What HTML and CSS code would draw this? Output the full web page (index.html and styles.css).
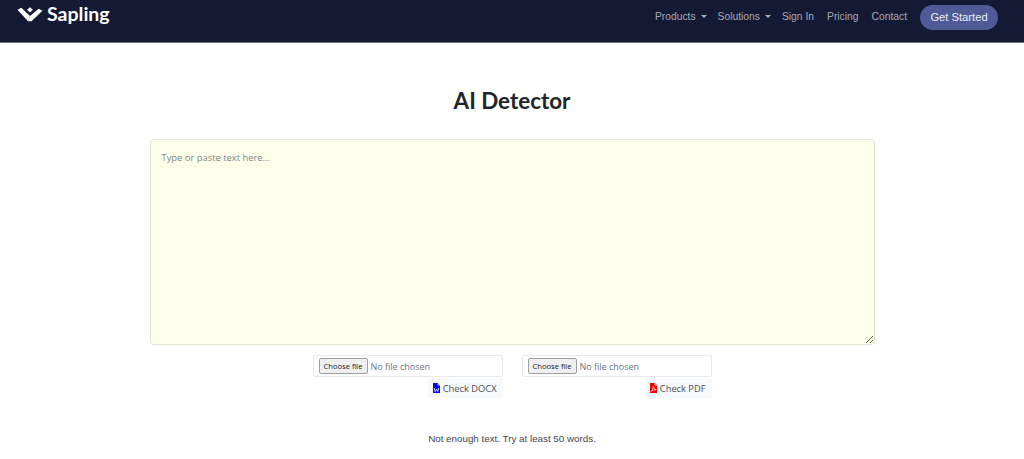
FILE: index.html
```html
<!DOCTYPE html>
<html lang="en">
<head>
<meta charset="utf-8">
<title>AI Detector - Sapling</title>
<link rel="stylesheet" href="styles.css">
</head>
<body>
<header class="navbar">
  <a class="brand" href="#">
    <svg class="brand-mark" viewBox="0 0 27 15" width="26" height="15" aria-hidden="true">
      <path d="M0.5 2.5 L4.5 0.5 L13.5 9 L11.5 14.5 Z" fill="#fff"/>
      <path d="M11.5 14.5 L15 14.5 L26.5 3.5 L22.5 1.5 L13.5 9 Z" fill="#fff"/>
      <path d="M10.5 2.5 L13.5 0 L16.5 2.5 L13.5 5.5 Z" fill="#fff"/>
    </svg>
    <span class="brand-name">Sapling</span>
  </a>
  <nav class="nav-links">
    <a class="nav-link nav-menu" href="#">Products<span class="caret"></span></a>
    <a class="nav-link nav-menu" href="#">Solutions<span class="caret"></span></a>
    <a class="nav-link" href="#">Sign In</a>
    <a class="nav-link" href="#">Pricing</a>
    <a class="nav-link" href="#">Contact</a>
    <a class="cta" href="#">Get Started</a>
  </nav>
</header>
<main class="content">
  <h1 class="title">AI Detector</h1>
  <textarea class="editor" placeholder="Type or paste text here..."></textarea>
  <div class="uploads">
    <div class="upload">
      <label class="file">
        <span class="file-button">Choose file</span>
        <span class="file-name">No file chosen</span>
      </label>
      <button class="check check-docx" type="button">
        <svg class="doc-icon" viewBox="0 0 7 10" width="7" height="10" aria-hidden="true">
          <path d="M0 0 H4.5 L7 2.5 V10 H0 Z" fill="#0000f0"/>
          <path d="M4.5 0 L7 2.5 H4.5 Z" fill="#b0b4f0"/>
          <path d="M1.2 5 L2.2 8.6 L3.5 6 L4.8 8.6 L5.8 5" fill="none" stroke="#fff" stroke-width="0.8"/>
        </svg>
        Check DOCX
      </button>
    </div>
    <div class="upload">
      <label class="file">
        <span class="file-button">Choose file</span>
        <span class="file-name">No file chosen</span>
      </label>
      <button class="check" type="button">
        <svg class="doc-icon" viewBox="0 0 7 10" width="7" height="10" aria-hidden="true">
          <path d="M0 0 H4.5 L7 2.5 V10 H0 Z" fill="#f00000"/>
          <path d="M4.5 0 L7 2.5 H4.5 Z" fill="#fbb"/>
          <path d="M1 8.6 C2.6 7.4 3.5 5.2 3.2 3.4 C3.8 5.4 4.6 6.4 6.2 6.8 C4.4 6.7 2.6 7.2 1 8.6 Z" fill="none" stroke="#fff" stroke-width="0.7"/>
        </svg>
        Check PDF
      </button>
    </div>
  </div>
  <p class="status">Not enough text. Try at least 50 words.</p>
</main>
</body>
</html>
```

FILE: styles.css
```css
* {
  box-sizing: border-box;
}

html,
body {
  margin: 0;
  padding: 0;
  background: #fff;
  overflow: hidden;
}

body {
  font-family: "Liberation Sans", Arial, sans-serif;
  color: #212529;
}

.navbar {
  display: flex;
  align-items: flex-start;
  justify-content: space-between;
  height: 43px;
  padding: 5px 26px 0 17px;
  background: #141a33;
  border-bottom: 1px solid #6f7280;
}

.brand {
  display: flex;
  align-items: center;
  gap: 4px;
  margin-top: -3px;
  color: #fff;
  text-decoration: none;
}

.brand-mark {
  display: block;
}

.brand-name {
  font-family: Lato, sans-serif;
  font-size: 19.5px;
  font-weight: 700;
  line-height: 24px;
}

.nav-links {
  display: flex;
  align-items: center;
  gap: 13px;
}

.nav-link {
  display: inline-flex;
  align-items: center;
  margin-top: -2px;
  color: #a7a8b6;
  font-size: 10.3px;
  line-height: 22px;
  text-decoration: none;
}

.nav-menu {
  margin-right: -2px;
}

.caret {
  width: 0;
  height: 0;
  margin-left: 5px;
  border-top: 3px solid #a7a8b6;
  border-left: 3px solid transparent;
  border-right: 3px solid transparent;
}

.cta {
  display: block;
  width: 78px;
  height: 25px;
  border-radius: 13px;
  background: #4f5a97;
  color: #eceef6;
  font-size: 11.2px;
  line-height: 25px;
  text-align: center;
  text-decoration: none;
}

.content {
  display: flex;
  flex-direction: column;
  align-items: center;
}

.title {
  margin: 43px 0 23px;
  font-family: Lato, sans-serif;
  font-size: 22.4px;
  font-weight: 700;
  line-height: 30px;
  color: #212529;
}

.editor {
  display: block;
  width: 725px;
  height: 206px;
  padding: 10px 11px;
  border: 1px solid #e2e4d6;
  border-radius: 4px;
  background: #fdffea;
  font-family: "Open Sans", sans-serif;
  font-size: 9.4px;
  line-height: 16px;
  color: #495057;
  outline: none;
}

.editor::placeholder {
  color: #7f868d;
  opacity: 1;
}

.uploads {
  display: flex;
  gap: 19px;
  margin-top: 10px;
}

.upload {
  display: flex;
  flex-direction: column;
  align-items: flex-end;
  width: 190px;
}

.file {
  display: flex;
  align-items: center;
  gap: 3px;
  width: 190px;
  height: 22px;
  padding: 0 5px;
  border: 1px solid #e8e9ec;
  border-radius: 2px;
  background: #fff;
  font-family: "Open Sans", sans-serif;
}

.file-button {
  display: block;
  width: 49px;
  height: 16px;
  border: 1px solid #a0a0a0;
  border-radius: 2px;
  background: #efefef;
  font-size: 7.6px;
  line-height: 14px;
  text-align: center;
  color: #222;
}

.file-name {
  font-size: 9px;
  color: #6c757d;
}

.check {
  display: inline-flex;
  align-items: center;
  gap: 3px;
  height: 20px;
  margin-top: 1px;
  padding: 0 6px 0 5px;
  border: 0;
  background: #f8f9fa;
  font-family: "Open Sans", sans-serif;
  font-size: 9.3px;
  color: #495057;
}

.doc-icon {
  display: block;
  flex: none;
}

.status {
  margin: 33px 0 0;
  font-size: 9.8px;
  line-height: 16px;
  color: #3f464d;
}
```
